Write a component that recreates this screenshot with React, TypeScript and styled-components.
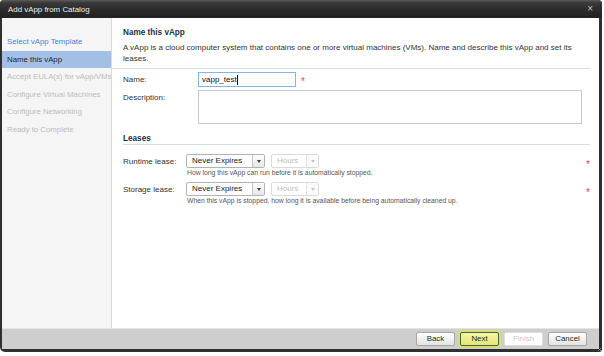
import styled, { createGlobalStyle, css } from "styled-components"

const GlobalStyle = createGlobalStyle`
  html, body {
    margin: 0;
    padding: 0;
    background: #fff;
  }
  body {
    font-family: "Liberation Sans", Arial, sans-serif;
    font-size: 8px;
    color: #333;
  }
`

const Window = styled.div`
  position: relative;
  width: 602px;
  height: 352px;
  box-sizing: border-box;
  display: flex;
  flex-direction: column;
  padding: 0 3px 3px 2px;
  background: #2f2f2f;
  border-radius: 4px 4px 3px 5px;
  overflow: hidden;
`

const TitleBar = styled.div`
  flex: none;
  height: 18px;
  margin: 0 -3px 0 -2px;
  padding: 0 9px 0 8px;
  display: flex;
  align-items: center;
  justify-content: space-between;
  background: linear-gradient(#5a5a5a 0, #383838 3px, #2a2a2a 60%, #222 100%);
  color: #ececec;
  font-size: 7.9px;
`

const CloseButton = styled.span`
  color: #c4c4c4;
  font-size: 10px;
  line-height: 10px;
  cursor: pointer;
`

const Body = styled.div`
  flex: 1;
  display: flex;
  background: #fff;
  min-height: 0;
`

const Sidebar = styled.div`
  width: 109px;
  flex: none;
  padding-top: 15px;
  background: #f5f5f5;
  border-right: 1px solid #dadada;
  overflow: hidden;
`

const Step = styled.div<{ $state: "done" | "active" | "todo" }>`
  height: 17.5px;
  line-height: 17.5px;
  padding-left: 5px;
  font-size: 7.8px;
  white-space: nowrap;
  ${({ $state }) =>
    $state === "done"
      ? css`
          color: #3d86dc;
        `
      : $state === "active"
      ? css`
          color: #1b2635;
          background: #a3bfe6;
        `
      : css`
          color: #bcbcbc;
        `}
`

const Main = styled.div`
  flex: 1;
  display: flex;
  flex-direction: column;
  padding-right: 9px;
`

const Header = styled.div`
  padding: 9px 0 4px 11px;
  border-bottom: 1px solid #d6dede;
`

const Heading = styled.div`
  font-size: 8.2px;
  font-weight: bold;
  line-height: 12px;
  color: #173442;
`

const Intro = styled.p`
  margin: 3px 0 0;
  padding-right: 12px;
  line-height: 11px;
  color: #333;
`

const Form = styled.div`
  padding-left: 11px;
  display: flex;
  flex-direction: column;
`

const Row = styled.div<{ $gap: number; $top?: boolean }>`
  display: flex;
  align-items: ${({ $top }) => ($top ? "flex-start" : "center")};
  margin-top: ${({ $gap }) => $gap}px;
`

const Label = styled.div<{ $width: number; $pad?: number }>`
  width: ${({ $width }) => $width}px;
  flex: none;
  color: #333;
  padding-top: ${({ $pad = 0 }) => $pad}px;
`

const TextField = styled.div`
  width: 98px;
  height: 15px;
  box-sizing: border-box;
  border: 1px solid #80b6ea;
  background: #fff;
  padding-left: 3px;
  display: flex;
  align-items: center;
  color: #111;
`

const Caret = styled.span`
  display: inline-block;
  width: 1px;
  height: 10px;
  background: #111;
`

const TextArea = styled.textarea`
  width: 384px;
  height: 34px;
  box-sizing: border-box;
  border: 1px solid #c9c9c9;
  resize: none;
  margin: 0;
  font: inherit;
  outline: none;
`

const Required = styled.span<{ $ml?: number; $pad: number }>`
  align-self: flex-start;
  color: #e24a4a;
  font-size: 10px;
  line-height: 10px;
  padding-top: ${({ $pad }) => $pad}px;
  margin-left: ${({ $ml }) => ($ml === undefined ? "auto" : `${$ml}px`)};
`

const SectionTitle = styled.div`
  margin-top: 9px;
  font-size: 8.2px;
  font-weight: bold;
  line-height: 11px;
  color: #173442;
  border-bottom: 1px solid #d6dede;
`

const Controls = styled.div`
  display: flex;
  flex-direction: column;
`

const SelectRow = styled.div`
  display: flex;
  gap: 6px;
`

const Select = styled.div<{ $width: number; $disabled?: boolean }>`
  width: ${({ $width }) => $width}px;
  height: 14px;
  box-sizing: border-box;
  display: flex;
  border: 1px solid ${({ $disabled }) => ($disabled ? "#dadada" : "#b3b3b3")};
  border-radius: 2px;
  background: #fff;
  color: ${({ $disabled }) => ($disabled ? "#bdbdbd" : "#1a1a1a")};
`

const SelectValue = styled.span`
  flex: 1;
  padding-left: 5px;
  line-height: 12px;
`

const SelectArrow = styled.span<{ $disabled?: boolean }>`
  width: 11px;
  flex: none;
  display: flex;
  align-items: center;
  justify-content: center;
  border-left: 1px solid ${({ $disabled }) => ($disabled ? "#e2e2e2" : "#c6c6c6")};
  background: ${({ $disabled }) =>
    $disabled ? "#fafafa" : "linear-gradient(#fdfdfd, #e6e6e6)"};
  &::after {
    content: "";
    border-left: 2.5px solid transparent;
    border-right: 2.5px solid transparent;
    border-top: 3px solid ${({ $disabled }) => ($disabled ? "#c4c4c4" : "#3a3a3a")};
  }
`

const Help = styled.div`
  margin-top: 1px;
  padding-left: 1px;
  font-size: 6.8px;
  line-height: 8px;
  color: #555;
  white-space: nowrap;
`

const Footer = styled.div`
  flex: none;
  height: 21px;
  box-sizing: border-box;
  border-top: 1px solid #e4e4e4;
  background: #cecece;
  display: flex;
  align-items: center;
  justify-content: flex-end;
  gap: 5px;
  padding: 0 12px 1px 0;
`

const Button = styled.button<{ $variant?: "primary" | "disabled" }>`
  width: 39px;
  height: 14px;
  box-sizing: border-box;
  padding: 0;
  font-family: inherit;
  font-size: 7.9px;
  border-radius: 2px;
  cursor: pointer;
  ${({ $variant }) =>
    $variant === "primary"
      ? css`
          color: #1c2a1c;
          background: linear-gradient(#f6f6a0, #e6e678);
          border: 1px solid #3d6650;
          box-shadow: 0 0 0 2px #dcdc72;
        `
      : $variant === "disabled"
      ? css`
          color: #c8c8c8;
          background: #fff;
          border: 1px solid #dedede;
        `
      : css`
          color: #2a2a2a;
          background: linear-gradient(#fefefe, #e4e4e4);
          border: 1px solid #a6a6a6;
        `}
`

const Grip = styled.svg`
  position: absolute;
  right: 0;
  bottom: 0;
`

const steps: { label: string; state: "done" | "active" | "todo" }[] = [
  { label: "Select vApp Template", state: "done" },
  { label: "Name this vApp", state: "active" },
  { label: "Accept EULA(s) for vApp/VMs", state: "todo" },
  { label: "Configure Virtual Machines", state: "todo" },
  { label: "Configure Networking", state: "todo" },
  { label: "Ready to Complete", state: "todo" },
]

const leases = [
  {
    label: "Runtime lease:",
    help: "How long this vApp can run before it is automatically stopped.",
    gap: 9,
  },
  {
    label: "Storage lease:",
    help: "When this vApp is stopped, how long it is available before being automatically cleaned up.",
    gap: 5,
  },
]

export default function App() {
  return (
    <>
      <GlobalStyle />
      <Window>
        <TitleBar>
          <span>Add vApp from Catalog</span>
          <CloseButton>×</CloseButton>
        </TitleBar>
        <Body>
          <Sidebar>
            {steps.map((s) => (
              <Step key={s.label} $state={s.state}>
                {s.label}
              </Step>
            ))}
          </Sidebar>
          <Main>
            <Header>
              <Heading>Name this vApp</Heading>
              <Intro>
                A vApp is a cloud computer system that contains one or more virtual machines
                (VMs). Name and describe this vApp and set its leases.
              </Intro>
            </Header>
            <Form>
              <Row $gap={3}>
                <Label $width={75}>Name:</Label>
                <TextField>
                  vapp_test
                  <Caret />
                </TextField>
                <Required $ml={5} $pad={5}>
                  *
                </Required>
              </Row>
              <Row $gap={3} $top>
                <Label $width={75} $pad={3}>
                  Description:
                </Label>
                <TextArea />
              </Row>
              <SectionTitle>Leases</SectionTitle>
              {leases.map((l) => (
                <Row key={l.label} $gap={l.gap} $top>
                  <Label $width={63} $pad={3}>
                    {l.label}
                  </Label>
                  <Controls>
                    <SelectRow>
                      <Select $width={79}>
                        <SelectValue>Never Expires</SelectValue>
                        <SelectArrow />
                      </Select>
                      <Select $width={48} $disabled>
                        <SelectValue>Hours</SelectValue>
                        <SelectArrow $disabled />
                      </Select>
                    </SelectRow>
                    <Help>{l.help}</Help>
                  </Controls>
                  <Required $pad={6}>*</Required>
                </Row>
              ))}
            </Form>
          </Main>
        </Body>
        <Footer>
          <Button>Back</Button>
          <Button $variant="primary">Next</Button>
          <Button $variant="disabled">Finish</Button>
          <Button>Cancel</Button>
        </Footer>
        <Grip width="5" height="5" viewBox="0 0 5 5">
          <path d="M1 4 L4 1 M3 4 L4 3" stroke="#9a9a9a" strokeWidth="0.8" />
        </Grip>
      </Window>
    </>
  )
}
